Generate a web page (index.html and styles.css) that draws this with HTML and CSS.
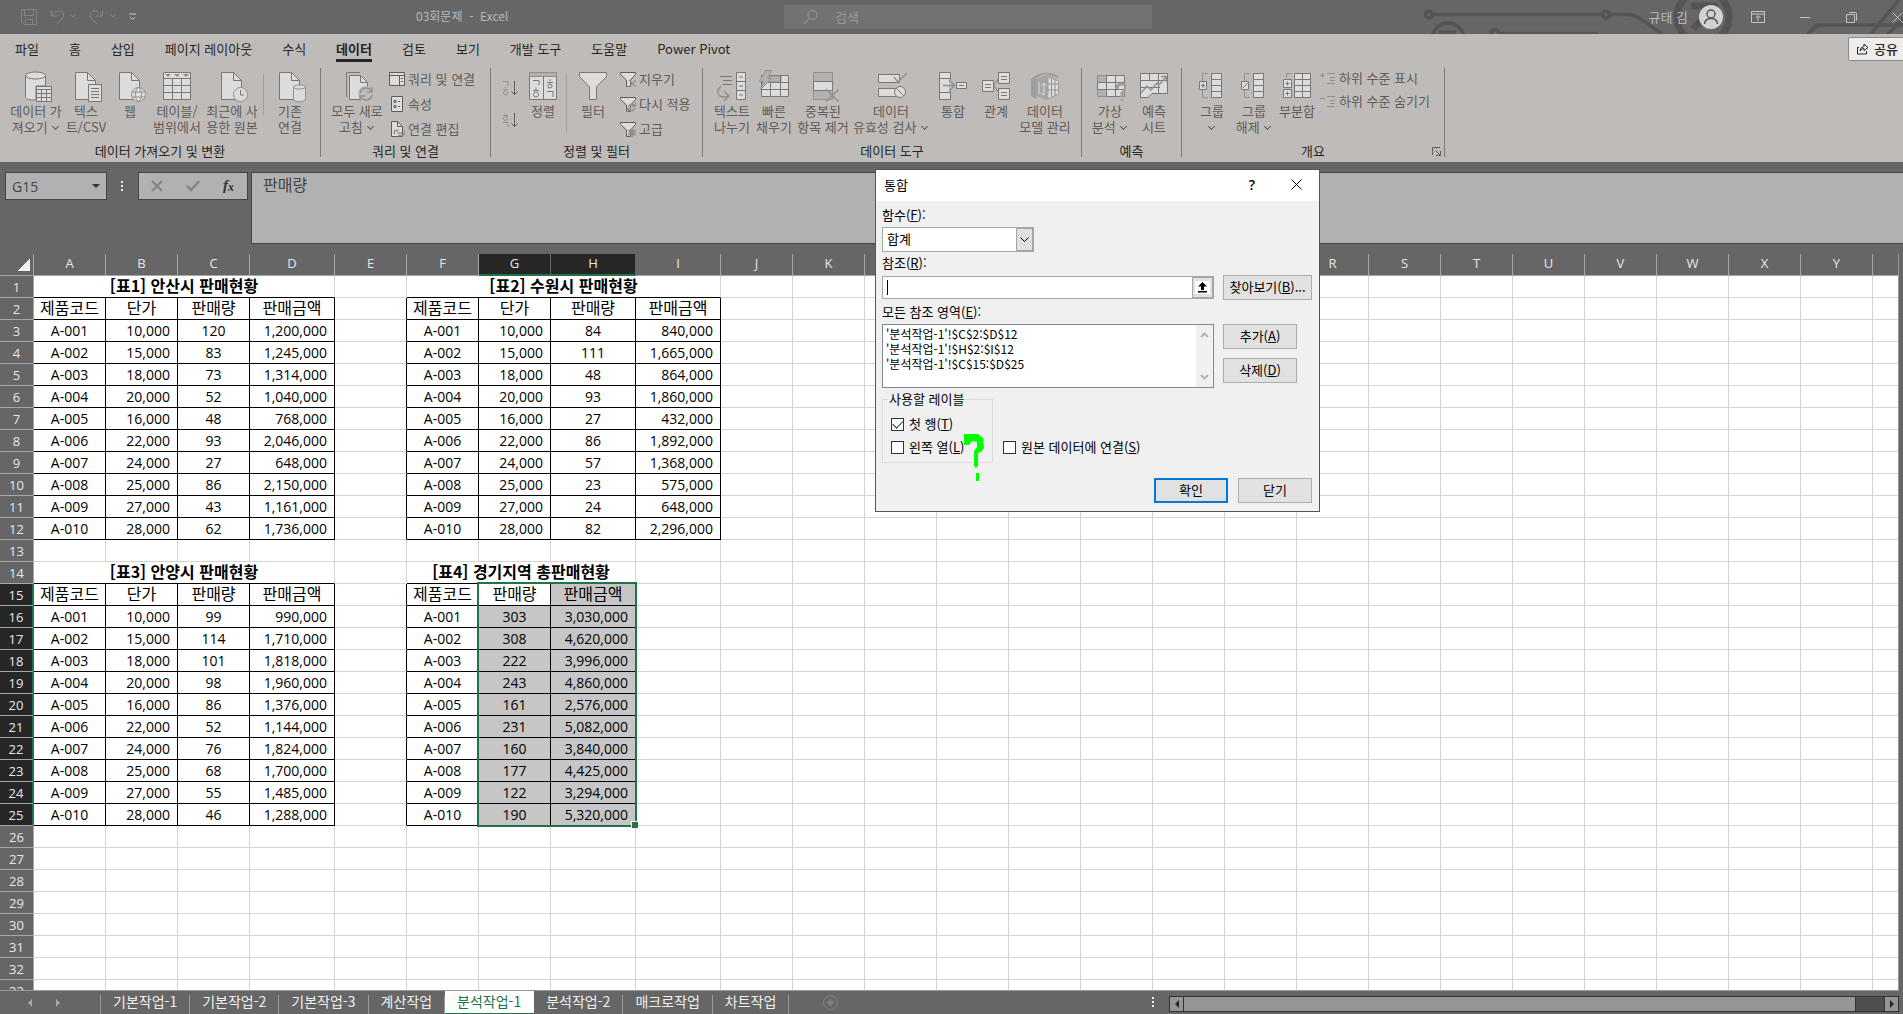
FILE: index.html
```html
<!DOCTYPE html>
<html lang="ko">
<head>
<meta charset="utf-8">
<title>03회문제 - Excel</title>
<link rel="stylesheet" href="styles.css">
</head>
<body>
<div class="app">
  <header class="titlebar">
    <svg class="circuit" width="503" height="34" viewBox="0 0 503 34" aria-hidden="true">
      <g fill="none" stroke="#545454" stroke-width="3.5">
        <circle cx="29" cy="14.500" r="3.500"/><circle cx="206" cy="14.500" r="3.500"/>
        <path d="M33 14.500H202M210 14.500H228Q236 15 242 20L262 34"/>
        <circle cx="95" cy="33" r="3.500"/><path d="M99 33.500H198"/>
        <circle cx="48" cy="39" r="16"/><path d="M39 33H56" stroke-width="5"/>
        <circle cx="303" cy="17" r="26" stroke-width="7"/><path d="M291 6H318" stroke-width="7"/><path d="M293 29L312 10" stroke-width="7"/>
        <path d="M407 35L417 25H503M470 35L499 0M487 35L503 19"/>
      </g>
    </svg>
    <div class="quick">
      <button class="ic" aria-label="저장"><svg width="18" height="18" viewBox="0 0 18 18"><path d="M1.500 1.500H16.500V16.500H4L1.500 14ZM4.500 1.500V7.500H13.500V1.500M5.500 16V11.500H12.500V16"/></svg></button>
      <button class="ic" aria-label="실행 취소"><svg width="26" height="18" viewBox="0 0 26 18"><path d="M1.500 2V8H8M2 7.500Q7 1 12 3.500Q16 7 11 12L6.500 16.500M20.500 6.500L23 9L25.500 6.500"/></svg></button>
      <button class="ic" aria-label="다시 실행"><svg width="28" height="18" viewBox="0 0 28 18"><path d="M14.500 2V8H8M14 7.500Q9 1 4 3.500Q0 7 5 12L9.500 16.500M22.500 6.500L25 9L27.500 6.500"/></svg></button>
      <button class="ic light" aria-label="사용자 지정"><svg width="10" height="10" viewBox="0 0 10 10"><path d="M1 2H8M2 5L4.500 7.500L7 5"/></svg></button>
    </div>
    <div class="doc-title">03회문제&nbsp; -&nbsp; Excel</div>
    <label class="search">
      <svg width="16" height="16" viewBox="0 0 16 16" aria-hidden="true"><circle cx="9.500" cy="6" r="4.500"/><path d="M6.500 9.500L1 15"/></svg>
      <input type="text" placeholder="검색" aria-label="검색">
    </label>
    <div class="window-tools">
      <span class="user">규태 김</span>
      <svg class="avatar" width="24" height="24" viewBox="0 0 24 24" aria-hidden="true"><circle cx="12" cy="12" r="12" fill="#d2d2d2"/><g fill="none" stroke="#555" stroke-width="1.5"><circle cx="12" cy="9" r="4"/><path d="M5.500 19Q6 13.500 12 13.500T18.500 19"/></g></svg>
      <button class="ic light" aria-label="리본 표시 옵션"><svg width="14" height="12" viewBox="0 0 14 12"><path d="M.5 .5H13.500V11.500H.5ZM.5 3H13.500M7 10V5M4.500 7L7 4.500L9.500 7"/></svg></button>
      <button class="ic light" aria-label="최소화"><svg width="11" height="11" viewBox="0 0 11 11"><path d="M0 5.500H10"/></svg></button>
      <button class="ic light" aria-label="복원"><svg width="11" height="11" viewBox="0 0 11 11"><path d="M.5 2.500H8.500V10.500H.5ZM3 .5H9Q10.500 .5 10.500 2V8.500"/></svg></button>
      <button class="ic light" aria-label="닫기"><svg width="11" height="11" viewBox="0 0 11 11"><path d="M.5 .5L10.500 10.500M10.500 .5L.5 10.500"/></svg></button>
    </div>
  </header>

  <nav class="tabs">
    <button>파일</button><button>홈</button><button>삽입</button><button>페이지 레이아웃</button><button>수식</button><button class="on">데이터</button><button>검토</button><button>보기</button><button>개발 도구</button><button>도움말</button><button>Power Pivot</button>
    <button class="share"><svg width="13" height="13" viewBox="0 0 13 13"><path d="M3 5.500H1.500V12H10.500V9M4 9Q4 5 8 4.500V2L12 5.500L8 8.500V6.500Q5.500 6.500 4 9Z"/></svg>공유</button>
  </nav>

  <div class="ribbon">
    <section class="group w-get">
      <div class="cmds">
        <button class="cmd c54"><svg viewBox="0 0 32 32"><path class="f" d="M5.500 5.500V27.500Q6 30 15.500 30H16V16H25.500V5.500"/><ellipse class="f" cx="15.500" cy="5.500" rx="10" ry="3.500"/><path class="f" d="M16.500 16.500H31.500V31.500H16.500Z"/><path d="M16.500 19.500H31.500M16.500 23.500H31.500M16.500 27.500H31.500M21.500 19.500V31M26.500 19.500V31"/></svg><span>데이터 가<br>져오기 <i></i></span></button>
        <button class="cmd c46"><svg viewBox="0 0 32 32"><path class="f" d="M5.500 2.500H17.500L25.500 10.500V29.500H5.500Z"/><path d="M17.500 2.500V10.500H25.500"/><path class="f" d="M18.500 14.500H31.500V31.500H18.500Z"/><path d="M21 18.500H29M21 21.500H29M21 24.500H29M21 27.500H29"/></svg><span>텍스<br>트/CSV</span></button>
        <button class="cmd c42"><svg viewBox="0 0 32 32"><path class="f" d="M5.500 2.500H17.500L25.500 10.500V29.500H5.500Z"/><path d="M17.500 2.500V10.500H25.500"/><g class="s"><circle class="f" cx="24.500" cy="24.500" r="7"/><ellipse cx="24.500" cy="24.500" rx="3" ry="7"/><path d="M18 22H31M18 27H31"/></g></svg><span>웹</span></button>
        <button class="cmd c52"><svg viewBox="0 0 32 32"><path class="f" d="M2.500 2.500H29.500V29.500H2.500Z"/><path d="M2.500 8.500H29.500M2.500 15.500H29.500M2.500 22.500H29.500M11.500 8.500V29M20.500 8.500V29"/><path class="g" d="M4 4H10L7 7ZM13 4H19L16 7ZM22 4H28L25 7Z"/></svg><span>테이블/<br>범위에서</span></button>
        <button class="cmd c58"><svg viewBox="0 0 32 32"><path class="f" d="M5.500 2.500H17.500L25.500 10.500V29.500H5.500Z"/><path d="M17.500 2.500V10.500H25.500"/><circle class="f s" cx="24.500" cy="24.500" r="7"/><path d="M24.500 20V25H28"/></svg><span>최근에 사<br>용한 원본</span></button>
        <span class="bar short"></span>
        <button class="cmd c48"><svg viewBox="0 0 32 32"><path class="f" d="M5.500 2.500H17.500L25.500 10.500V29.500H5.500Z"/><path d="M17.500 2.500V10.500H25.500"/><g class="s"><path class="f" d="M19.500 17V29Q20 31.500 25.500 31.500T31.500 29V17"/><ellipse class="f" cx="25.500" cy="17" rx="6" ry="2"/></g></svg><span>기존<br>연결</span></button>
      </div>
      <h2>데이터 가져오기 및 변환</h2>
    </section>
    <section class="group w-query">
      <div class="cmds">
        <button class="cmd c58"><svg viewBox="0 0 32 32"><path d="M5.500 27V2.500H19"/><path class="f" d="M8.500 5.500H19.500L26.500 12.500V29.500H8.500Z"/><path d="M19.500 5.500V12.500H26.500"/><circle cx="25" cy="24" r="8" fill="#bfbbb8" stroke="none"/><path class="s2" d="M19 23Q20 18 25 18Q29 18 31 22M31 17V22H26M31 25Q30 30 25 30Q21 30 19 26M19 31V26H24"/></svg><span>모두 새로<br>고침 <i></i></span></button>
        <div class="stack">
          <button><svg viewBox="0 0 16 16"><path class="f" d="M.5 1.500H15.500V14.500H.5Z"/><path d="M.5 4.500H15.500M10.500 4.500V14M12 7.500H14M12 10.500H14"/></svg>쿼리 및 연결</button>
          <button><svg viewBox="0 0 16 16"><path class="f" d="M2.500 .5H13.500V15.500H2.500Z"/><path d="M5 4.500H7V6.500H5ZM9 5.500H11M5 9.500H7V11.500H5ZM9 10.500H11"/></svg>속성</button>
          <button><svg viewBox="0 0 16 16"><path class="f" d="M2.500 .5H8.500L13.500 5.500V15.500H2.500Z"/><path d="M8.500 .5V5.500H13.500"/><path class="s2" d="M6 13Q4 10 7 9.500H10M15 10Q17 14 13 14.500H9M8 12H13"/></svg>연결 편집</button>
        </div>
      </div>
      <h2>쿼리 및 연결</h2>
    </section>
    <section class="group w-sort">
      <div class="cmds">
        <div class="stack sorts">
          <button aria-label="오름차순"><svg viewBox="0 0 16 16"><path class="s" d="M1 1.500H6V6M1 9.500H6M3 7.500H4"/><circle cx="3.500" cy="13" r="2" class="s"/><path d="M12.500 1V14.500M9.500 11.500L12.500 14.500L15.500 11.500"/></svg></button>
          <button aria-label="내림차순"><svg viewBox="0 0 16 16"><path class="s" d="M1 10.500H6V15M1 3.500H6M3 1.500H4"/><circle cx="3.500" cy="6.500" r="2" class="s"/><path d="M12.500 1V14.500M9.500 11.500L12.500 14.500L15.500 11.500"/></svg></button>
        </div>
        <button class="cmd c42"><svg viewBox="0 0 32 32"><path class="f" d="M2.500 2.500H29.500V29.500H2.500Z"/><path class="m" d="M2.500 2.500H29.500V6.500H2.500Z"/><path d="M16.500 6.500V29.500M6 10.500H12V15M6 20.500H12M9 17.500V20M23 9V11M20 12.500H26M20 21.500H26V27"/><circle cx="9" cy="24.500" r="2.500"/><circle cx="23" cy="16" r="2"/></svg><span>정렬</span></button>
        <span class="bar"></span>
        <button class="cmd c48"><svg viewBox="0 0 32 32"><path class="f" d="M2.500 2.500H29.500V6.500L19.500 17V29.500H12.500V17L2.500 6.500Z"/></svg><span>필터</span></button>
        <div class="stack">
          <button><svg viewBox="0 0 16 16"><path class="f" d="M.5 1.500H15.500V3.500L10.500 9V15.500H6.500V9L.5 3.500Z"/><path class="s2" d="M9 9L16 16M16 9L9 16"/></svg>지우기</button>
          <button><svg viewBox="0 0 16 16"><path class="f" d="M.5 1.500H15.500V3.500L10.500 9V15.500H6.500V9L.5 3.500Z"/><path class="s2" d="M8 11Q11 6 15 10M15.500 6V10H12M15 12Q12 17 8 13M7.500 16V12.500H11"/></svg>다시 적용</button>
          <button><svg viewBox="0 0 16 16"><path class="f" d="M.5 1.500H15.500V3.500L10.500 9V15.500H6.500V9L.5 3.500Z"/><circle class="s2" cx="12" cy="11.500" r="2.500"/><path class="s2" d="M12 7V16M8 9L16 14M16 9L8 14"/></svg>고급</button>
        </div>
      </div>
      <h2>정렬 및 필터</h2>
    </section>
    <section class="group w-tools">
      <div class="cmds">
        <button class="cmd c42"><svg viewBox="0 0 32 32"><path d="M4 6.500H16M7 10.500H16M7 14.500H16"/><path class="s2" d="M5 16Q-1 22 4 26Q8 28 12 26M8 21L13 26L8 31"/><path class="f" d="M20.500 2.500H29.500V29.500H20.500Z"/><path d="M20.500 11.500H29.500M20.500 20.500H29.500M23 7H27M23 16H27M23 25H27"/></svg><span>텍스트<br>나누기</span></button>
        <button class="cmd c42"><svg viewBox="0 0 32 32"><path class="f" d="M3.500 5.500H30.500V26.500H3.500Z"/><path class="m" d="M12 6H23V12H8Z"/><path d="M3.500 12.500H30.500M3.500 19.500H30.500M12.500 12V26M22.500 5V26"/><path class="m" d="M7.500 .5H13.500L9.500 8.500H13.500L2.500 19.500L5.500 11.500H1.500Z"/></svg><span>빠른<br>채우기</span></button>
        <button class="cmd c56"><svg viewBox="0 0 32 32"><path class="m" d="M6.500 2.500H25.500V29.500H6.500Z"/><path class="f" d="M6.500 11.500H25.500V20.500H6.500Z"/><path class="s2" d="M19 19L32 32M32 19L19 32"/></svg><span>중복된<br>항목 제거</span></button>
        <button class="cmd c80"><svg viewBox="0 0 32 32"><path class="f" d="M3.500 4.500H24.500V12.500H3.500ZM3.500 18.500H24.500V26.500H3.500Z"/><path class="s2" d="M19 7L23 12L32 3"/><circle class="f" cx="25" cy="22" r="5.500"/><path d="M21 18L29 26"/></svg><span>데이터<br>유효성 검사 <i></i></span></button>
        <button class="cmd c44"><svg viewBox="0 0 32 32"><path class="f" d="M2.500 2.500H13.500V29.500H2.500Z"/><path d="M2.500 8.500H13.500M2.500 22.500H13.500"/><path d="M13.500 10V21" stroke="#bfbbb8" stroke-width="3"/><path class="s2" d="M6 15.500H17M12 10L17.500 15.500L12 21"/><path class="f" d="M19.500 12.500H29.500V18.500H19.500Z"/><path d="M22 15.500H27"/></svg><span>통합</span></button>
        <button class="cmd c42"><svg viewBox="0 0 32 32"><path class="f" d="M2.500 10.500H13.500V21.500H2.500ZM18.500 2.500H29.500V13.500H18.500ZM18.500 18.500H29.500V29.500H18.500Z"/><path d="M5 14.500H11M5 17.500H11M21 6.500H27M21 9.500H27M21 22.500H27M21 25.500H27M18.500 9L13.500 15.500L18.500 22"/></svg><span>관계</span></button>
        <button class="cmd c56"><svg viewBox="0 0 32 32"><path d="M2 9Q14 -2 30 6L28 8L16 4L7 8V29L2 26Z" fill="#a19f9d" stroke="none"/><path d="M7 9L17 5L30 11V24L17 30L7 26Z" fill="#a7a5a3" stroke="none"/><path d="M19 7L29.500 11V24L19 29Z" fill="#dddcdb" stroke="#a19f9d"/><path class="s" d="M22.500 8V27M26 10V26M19 14H29.500M19 20H29.500"/><path d="M10 12V24M15 25V13M12.500 15.500L15 13L17.500 15.500M15 25L12 23" stroke="#dddcdb"/></svg><span>데이터<br>모델 관리</span></button>
      </div>
      <h2>데이터 도구</h2>
    </section>
    <section class="group w-fore">
      <div class="cmds">
        <button class="cmd c46"><svg viewBox="0 0 32 32"><path class="f" d="M3.500 5.500H30.500V26.500H3.500Z"/><path class="m" d="M3.500 5.500H12.500V12.500H3.500ZM3.500 19.500H12.500V26.500H3.500Z"/><path d="M3.500 12.500H30.500M3.500 19.500H30.500M12.500 5V26M21.500 5V26"/><path d="M23 19Q23 14 27.500 14Q32 14 31.500 18.500Q31 21 28 23V27M28 29V31" stroke="#a19f9d" stroke-width="3"/></svg><span>가상<br>분석 <i></i></span></button>
        <button class="cmd c42"><svg viewBox="0 0 32 32"><path class="f" d="M2.500 3.500H29.500V23.500H14L10 27.500H2.500Z"/><path d="M2.500 10.500H29.500M2.500 17.500H22M11.500 3.500V10M20.500 3.500V23"/><path class="s2" d="M3 23L9 16L13 20L19 13L21 15L28 7M23 6.500H28.500V12"/></svg><span>예측<br>시트</span></button>
      </div>
      <h2>예측</h2>
    </section>
    <section class="group w-out">
      <div class="cmds">
        <button class="cmd c42"><svg viewBox="0 0 32 32"><path class="s" d="M12 3.500H6.500V11M6.500 20V27.500H12"/><path class="f" d="M15.500 3.500H25.500V27.500H15.500ZM3.500 11.500H10.500V19.500H3.500Z"/><path d="M15.500 9.500H25.500M15.500 15.500H25.500M15.500 21.500H25.500M5 15.500H9M7 13V18"/></svg><span>그룹<br><i></i></span></button>
        <button class="cmd c42"><svg viewBox="0 0 32 32"><path class="s" d="M12 3.500H6.500V11M6.500 20V27.500H12"/><path class="f" d="M15.500 3.500H25.500V27.500H15.500ZM3.500 11.500H10.500V19.500H3.500Z"/><path d="M15.500 9.500H25.500M15.500 15.500H25.500M15.500 21.500H25.500M5 18L9.500 13"/></svg><span>그룹<br>해제 <i></i></span></button>
        <button class="cmd c44"><svg viewBox="0 0 32 32"><path class="s" d="M11 3.500H5.500V8"/><path class="f" d="M13.500 3.500H29.500V27.500H13.500ZM2.500 9.500H10.500V17.500H2.500ZM2.500 19.500H10.500V27.500H2.500Z"/><path d="M13.500 9.500H29.500M13.500 15.500H29.500M13.500 21.500H29.500M21.500 3.500V27M4.500 13.500H8.500M6.500 11.500V15.500M4.500 23.500H8.500M6.500 21.500V25.500"/></svg><span>부분합</span></button>
        <div class="stack levels">
          <button><svg viewBox="0 0 16 16"><path class="s" d="M0 5.500H5M2.500 3V8M7 3.500H15M10 7.500H15M10 10.500H15M7 13.500H15"/></svg>하위 수준 표시</button>
          <button><svg viewBox="0 0 16 16"><path class="s" d="M0 5.500H5M7 3.500H15M10 7.500H15M10 10.500H15M7 13.500H15"/></svg>하위 수준 숨기기</button>
        </div>
      </div>
      <h2>개요</h2>
      <svg class="launch" width="9" height="9" viewBox="0 0 9 9" aria-hidden="true"><path d="M.5 8V.5H8M3.500 3.500L8 8M8.500 4V8.500H4"/></svg>
    </section>
  </div>

  <div class="formula">
    <label class="namebox"><input type="text" value="G15" aria-label="이름 상자"><span class="tri"></span></label>
    <span class="dots"></span>
    <div class="fx">
      <button aria-label="취소"><svg width="12" height="12" viewBox="0 0 12 12"><path d="M1 1L11 11M11 1L1 11"/></svg></button>
      <button aria-label="입력"><svg width="14" height="12" viewBox="0 0 14 12"><path d="M1 6L5 10L13 1" stroke-width="2.500"/></svg></button>
      <button aria-label="함수 삽입" class="fn">f<sub>x</sub></button>
    </div>
    <textarea aria-label="수식 입력줄">판매량</textarea>
  </div>

  <main class="sheet">
    <table class="grid" id="grid"></table>
    <div class="selection"><span></span></div>
  </main>

  <footer class="sheetbar">
    <div class="arrows"><span class="al"></span><span class="ar"></span></div>
    <button>기본작업-1</button><button>기본작업-2</button><button>기본작업-3</button><button>계산작업</button><button class="on">분석작업-1</button><button>분석작업-2</button><button>매크로작업</button><button>차트작업</button>
    <svg class="plus" width="15" height="15" viewBox="0 0 15 15" aria-hidden="true"><circle cx="7.500" cy="7.500" r="7"/><path d="M7.500 4V11M4 7.500H11" stroke-width="2"/></svg>
    <span class="dots"></span>
    <div class="hscroll"><span class="end"><b class="al"></b></span><span class="thumb"></span><span class="end last"><b class="ar"></b></span></div>
  </footer>
</div>

<form class="dialog" role="dialog" aria-labelledby="dlg-title">
  <div class="dlg-head"><h1 id="dlg-title">통합</h1>
    <button type="button" class="help" aria-label="도움말">?</button>
    <button type="button" class="close" aria-label="닫기"><svg width="11" height="11" viewBox="0 0 11 11"><path d="M.5 .5L10.500 10.500M10.500 .5L.5 10.500"/></svg></button>
  </div>
  <div class="dlg-body">
    <label for="fn">함수(<u>F</u>):</label>
    <div class="combo"><select id="fn"><option>합계</option></select><span class="drop"><svg width="9" height="6" viewBox="0 0 9 6"><path d="M.5 .5L4.500 4.500L8.500 .5"/></svg></span></div>
    <label for="ref">참조(<u>R</u>):</label>
    <div class="line">
      <div class="refbox"><input id="ref" type="text"><i class="caret"></i><button type="button" aria-label="범위 선택"><svg width="15" height="13" viewBox="0 0 15 13"><path fill="#fff" d="M0 0H15V13H0Z"/><path d="M7.500 1L12 5.500H9V9H6V5.500H3ZM3 10H12V11.500H3Z"/></svg></button></div>
      <button type="button" class="btn wide">찾아보기(<u>B</u>)...</button>
    </div>
    <label for="refs">모든 참조 영역(<u>E</u>):</label>
    <div class="line">
      <div class="listbox"><select id="refs" size="4" multiple><option>'분석작업-1'!$C$2:$D$12</option><option>'분석작업-1'!$H$2:$I$12</option><option>'분석작업-1'!$C$15:$D$25</option></select>
        <div class="vscroll"><svg width="9" height="6" viewBox="0 0 9 6"><path d="M1 5L4.500 1.500L8 5"/></svg><svg width="9" height="6" viewBox="0 0 9 6"><path d="M1 1L4.500 4.500L8 1"/></svg></div></div>
      <div class="col"><button type="button" class="btn">추가(<u>A</u>)</button><button type="button" class="btn">삭제(<u>D</u>)</button></div>
    </div>
    <div class="line options">
      <fieldset><legend>사용할 레이블</legend>
        <label><input type="checkbox" checked><span>첫 행(<u>T</u>)</span></label>
        <label><input type="checkbox"><span>왼쪽 열(<u>L</u>)</span></label>
      </fieldset>
      <label class="link"><input type="checkbox"><span>원본 데이터에 연결(<u>S</u>)</span></label>
      <svg class="mark" width="22" height="49" viewBox="0 0 22 49" aria-hidden="true"><path d="M1 1H15L20 5L21 15L18 19L15 20V33L13 35L11 33V18L14 14V9L9 8L6 12H1ZM13 40H16V48H13Z"/></svg>
    </div>
    <div class="foot"><button type="button" class="btn ok">확인</button><button type="button" class="btn">닫기</button></div>
  </div>
</form>
<script src="script.js"></script>
</body>
</html>
```

FILE: styles.css
```css
* { box-sizing: border-box; }
body {
  margin: 0;
  overflow: hidden;
  font-family: "Noto Sans CJK KR", "Open Sans", sans-serif;
  font-size: 13px;
  color: #262626;
}
button, input, select, textarea { font: inherit; color: inherit; margin: 0; padding: 0; border: 0; border-radius: 0; background: none; outline: 0; }
button { white-space: nowrap; }
h1, h2 { margin: 0; font-weight: 400; font-size: 13px; }
svg { display: block; flex: none; fill: none; stroke: currentColor; }
.app { display: flex; flex-direction: column; height: 100vh; background: #666; }

/* title bar */
.titlebar { position: relative; display: flex; align-items: center; height: 34px; flex: none; background: #666; color: #b8b8b8; overflow: hidden; }
.circuit { position: absolute; right: 0; top: 0; }
.quick { display: flex; align-items: center; gap: 12px; padding-left: 20px; width: 416px; color: #858585; }
.light { color: #c4c4c4; }
.doc-title { width: 368px; font-size: 12px; line-height: 16px; padding-bottom: 3px; }
.search { display: flex; align-items: center; gap: 16px; width: 368px; height: 24px; padding-left: 19px; background: #727272; color: #999; }
.search input { width: 200px; height: 20px; margin-bottom: 2px; font-size: 13px; }
.search input::placeholder { color: #999; opacity: 1; }
.window-tools { position: relative; display: flex; align-items: center; margin-left: auto; }
.user { margin-right: 11px; padding-bottom: 2px; font-size: 13px; }
.avatar { margin-right: 28px; stroke: none; }
.window-tools .ic { margin-right: 35px; }
.window-tools .ic:last-child { margin-right: 0; }

/* tabs */
.tabs { display: flex; align-items: stretch; height: 30px; flex: none; background: #bfbbb8; }
.tabs button { padding: 0 15px; line-height: 26px; display: flex; align-items: center; padding-bottom: 1px; }
.tabs .on { position: relative; font-weight: 700; }
.tabs .on::after { content: ""; position: absolute; left: 15px; right: 15px; bottom: 2px; height: 3px; background: #262626; }
.tabs .share { margin: 3px -4px 3px auto; height: 24px; padding: 0 8px 1px 7px; gap: 5px; background: #efedec; border: 1px solid #8c8987; border-radius: 2px; font-weight: 500; }

/* ribbon */
.ribbon { display: flex; height: 98px; flex: none; padding-top: 4px; background: #bfbbb8; overflow: hidden; }
.group { position: relative; display: flex; flex-direction: column; flex: none; height: 89px; border-right: 1px solid #7d7a78; }
.w-get { width: 321px; }
.w-get .cmds { padding-left: 9px; }
.w-query { width: 170px; }
.w-query .cmds { padding-left: 7px; }
.w-sort { width: 212px; }
.w-sort .cmds { padding-left: 11px; }
.w-tools { width: 379px; }
.w-tools .cmds { padding-left: 8px; }
.w-fore { width: 100px; }
.w-fore .cmds { padding-left: 5px; }
.w-out { width: 263px; }
.w-out .cmds { padding-left: 9px; }
.group h2 { text-align: center; line-height: 16px; padding-top: 7px; }
.cmds { display: flex; align-items: flex-start; height: 68px; flex: none; color: #6e6b69; }
.cmd { display: flex; flex-direction: column; align-items: center; line-height: 16px; padding-top: 2px; color: #5f5c5a; }
.cmd svg { width: 32px; height: 32px; margin-bottom: 1px; color: #7a7775; }
.cmd span { height: 32px; }
.cmd i { display: inline-block; width: 5px; height: 5px; border: solid #5f5c5a; border-width: 0 1px 1px 0; transform: rotate(45deg); margin: 0 2px 3px; }
.c42 { width: 42px; } .c44 { width: 44px; } .c46 { width: 46px; } .c48 { width: 48px; }
.c52 { width: 52px; } .c54 { width: 54px; } .c56 { width: 56px; } .c58 { width: 58px; } .c80 { width: 80px; }
.f { fill: #dddcdb; }
.g { fill: #8f8d8b; stroke: none; }
.m { fill: #b3b1af; stroke: #93918f; }
.s, .s2 { stroke: #93918f; }
.s2 { stroke-width: 1.5; }
.bar { width: 1px; height: 58px; margin: 6px 2px 0; background: #a19e9c; }
.bar.short { height: 41px; }
.stack { display: flex; flex-direction: column; margin: -2px 0 0 3px; }
.stack button { display: flex; align-items: center; gap: 3px; height: 25px; color: #5f5c5a; line-height: 16px; }
.stack svg { width: 16px; height: 16px; }
.sorts { gap: 7px; margin: 7px 4px 0 0; }
.levels { margin-left: 1px; }
.levels button { height: 23px; }
.launch { position: absolute; right: 3px; bottom: 1px; color: #5f5c5a; }

/* formula bar */
.formula { display: flex; align-items: flex-start; height: 92px; flex: none; padding: 10px 0 0 5px; color: #444; }
.namebox { display: flex; align-items: center; width: 102px; height: 28px; border: 1px solid #444; background: #b1b1b1; }
.namebox input { flex: 1; min-width: 0; padding-left: 6px; font-family: "Open Sans", sans-serif; font-size: 14px; }
.tri { margin-right: 6px; border: 4px solid transparent; border-top-color: #333; border-bottom: 0; }
.dots { width: 2px; height: 11px; background: repeating-linear-gradient(#eee 0 2px, transparent 2px 4px); }
.formula .dots { margin: 9px 15px 0 14px; }
.fx { display: flex; align-items: center; justify-content: space-between; width: 110px; height: 28px; padding: 0 13px 0 12px; border: 1px solid #444; background: #b1b1b1; color: #858585; }
.fx svg { stroke-width: 2; }
.fn { font: italic 700 15px "Liberation Serif", serif; color: #333; line-height: 20px; }
.fn sub { font-size: 12px; vertical-align: -1px; }
.formula textarea { flex: 1; height: 72px; margin-left: 3px; padding: 1px 11px; border: 1px solid #444; border-right: 0; background: #b1b1b1; font-size: 16px; line-height: 20px; resize: none; }

/* worksheet */
.sheet { position: relative; flex: 1; min-height: 0; overflow: hidden; margin-right: 4px; border-right: 1px solid #999; border-bottom: 1px solid #999; }
.grid { table-layout: fixed; width: 1945px; border-collapse: separate; border-spacing: 0; background: #666; }
.grid th, .grid td { height: 22px; padding: 0; overflow: hidden; white-space: nowrap; border: 0 solid #d4d4d4; border-width: 0 1px 1px 0; }
.grid th { font: 13px/20px "Open Sans", sans-serif; color: #e6e6e6; border-color: #a6a6a6; }
.grid thead th { line-height: 16px; padding-bottom: 4px; }
.grid td { background: #fff; color: #000; font: 14px/20px "Open Sans", sans-serif; text-align: center; }
.grid td.ko { font: 16px/16px "Noto Sans CJK KR", sans-serif; padding-bottom: 4px; }
.grid td.title { font: 700 16px/16px "Noto Sans CJK KR", sans-serif; padding-bottom: 4px; }
.grid td.num { text-align: right; padding-right: 7px; }
.grid td.bb { border-bottom-color: #000; }
.grid td.br { border-right-color: #000; }
.grid td.sel { background: #c6c6c6; }
.grid th.hot { background: #262626; border-right-color: #666; }
.grid thead th.hot { border-bottom: 2px solid #217346; padding-bottom: 3px; }
.grid tbody th.hot { border-right: 2px solid #217346; }
.corner { background: linear-gradient(135deg, transparent 50%, #f0f0f0 50%) 17px 4px / 13px 13px no-repeat; }
.selection { position: absolute; left: 477px; top: 328px; width: 160px; height: 245px; border: 2px solid #217346; }
.selection span { position: absolute; right: -3px; bottom: -3px; width: 6px; height: 6px; background: #217346; box-shadow: -1px -1px #fff; }

/* sheet tabs */
.sheetbar { display: flex; align-items: stretch; height: 23px; flex: none; padding-right: 4px; background: #666; color: #f0f0f0; }
.sheetbar button { padding: 0 13px 3px 12px; font-size: 14px; line-height: 18px; background: linear-gradient(#999, #999) right 4px / 1px 20px no-repeat; }
.sheetbar .on { background: #fff; color: #217346; border-bottom: 1px solid #217346; padding-bottom: 2px; }
.arrows { display: flex; align-items: center; gap: 24px; width: 101px; padding-left: 28px; background: linear-gradient(#999, #999) right 4px / 1px 20px no-repeat; }
.al, .ar { border: 4px solid transparent; color: #a6a6a6; }
.al { border-right-color: currentColor; border-left: 0; }
.ar { border-left-color: currentColor; border-right: 0; }
.plus { align-self: center; margin-left: 34px; color: #858585; }
.sheetbar .dots { align-self: center; margin-left: auto; }
.hscroll { display: flex; width: 730px; height: 16px; margin: 5px 0 0 15px; border: 1px solid #333; background: #4f4f4f; }
.end { display: flex; align-items: center; justify-content: center; width: 14px; background: #959595; border-right: 1px solid #333; }
.end b { color: #262626; }
.end.last { border: 0; border-left: 1px solid #333; margin-left: auto; }
.thumb { width: 672px; background: #959595; border-right: 1px solid #333; }

/* consolidate dialog */
.dialog { position: absolute; left: 875px; top: 169px; width: 445px; background: #f0f0f0; border: 1px solid #555; color: #000; line-height: 16px; }
.dlg-head { display: flex; align-items: center; height: 31px; padding: 0 17px 2px 8px; background: #fff; }
.dlg-head h1 { margin-right: auto; }
.help { font: 600 14px "Open Sans", sans-serif; margin-right: 36px; }
.dlg-body { display: flex; flex-direction: column; padding: 6px 7px 8px 6px; }
.dlg-body > label { height: 17px; }
.combo { display: flex; width: 152px; height: 25px; margin: 3px 0 3px; border: 1px solid #a6a6a6; background: #fff; }
.combo select { flex: 1; appearance: none; padding: 0 0 2px 4px; }
.drop { display: flex; align-items: center; justify-content: center; width: 17px; background: #e1e1e1; border: 1px solid #a6a6a6; }
.line { display: flex; align-items: flex-start; justify-content: space-between; }
.refbox { position: relative; display: flex; width: 332px; height: 23px; margin-top: 4px; border: 1px solid #a6a6a6; background: #fff; }
.refbox input { flex: 1; padding-left: 4px; }
.refbox button { display: flex; align-items: center; justify-content: center; width: 21px; background: #e1e1e1; border: 1px solid #a6a6a6; }
.refbox path { stroke: none; }
.refbox path + path { fill: #000; }
.caret { position: absolute; left: 4px; top: 3px; width: 1px; height: 15px; background: #000; }
.btn { width: 74px; height: 25px; padding-bottom: 2px; line-height: 16px; background: #e1e1e1; border: 1px solid #adadad; }
.btn.wide { width: 89px; margin: 3px 0 4px; }
.btn.ok { border: 2px solid #0078d7; }
.listbox { display: flex; width: 332px; height: 64px; margin-top: 3px; border: 1px solid #828790; background: #fff; }
.listbox select { flex: 1; height: 62px; overflow: hidden; font-size: 12px; }
.listbox option { height: 15px; min-height: 15px; line-height: 13px; padding: 0 3px 2px; }
.vscroll { display: flex; flex-direction: column; justify-content: space-between; align-items: center; width: 17px; padding: 7px 0; background: #f0f0f0; color: #b5b5b5; stroke-width: 2; }
.col { display: flex; flex-direction: column; gap: 9px; width: 89px; margin-top: 3px; }
.options { position: relative; justify-content: flex-start; margin-top: 3px; }
fieldset { width: 111px; height: 72px; margin: 0; padding: 6px 8px 0; border: 1px solid #dcdcdc; min-width: 0; }
legend { padding: 0 1px; margin-left: -3px; }
fieldset label, .link { display: flex; align-items: center; gap: 5px; height: 23px; white-space: nowrap; }
fieldset label span, .link span { padding-bottom: 2px; }
.link { margin: 45px 0 0 10px; }
input[type="checkbox"] { appearance: none; width: 13px; height: 13px; flex: none; border: 1px solid #333; background: #fff; }
input[type="checkbox"]:checked::after { content: ""; display: block; width: 9px; height: 5px; margin: 1px; border: solid #333; border-width: 0 0 1px 1px; transform: rotate(-45deg); }
.mark { position: absolute; left: 81px; top: 42px; fill: #0f0; stroke: none; }
.foot { display: flex; justify-content: flex-end; gap: 10px; margin-top: 15px; }
```

FILE: script.js
```js
const COLS = 'ABCDEFGHIJKLMNOPQRSTUVWXYZ'.split('');
const WIDE = ['D', 'H', 'I'];
const ROWS = 33;
const prices = [10000, 15000, 18000, 20000, 16000, 22000, 24000, 25000, 27000, 28000];
const blocks = [
  { title: '[표1] 안산시 판매현황', row: 1, col: 0, price: true, qty: [120, 83, 73, 52, 48, 93, 27, 86, 43, 62] },
  { title: '[표2] 수원시 판매현황', row: 1, col: 5, price: true, qty: [84, 111, 48, 93, 27, 86, 57, 23, 24, 82] },
  { title: '[표3] 안양시 판매현황', row: 14, col: 0, price: true, qty: [99, 114, 101, 98, 86, 52, 76, 68, 55, 46] },
  { title: '[표4] 경기지역 총판매현황', row: 14, col: 5, price: false, qty: [303, 308, 222, 243, 161, 231, 160, 177, 122, 190] }
];

// cell contents and classes, keyed by "row,col"
const cells = {};
const cell = (r, c) => (cells[r + ',' + c] ||= { text: '', cls: [] });

for (const b of blocks) {
  const heads = b.price ? ['제품코드', '단가', '판매량', '판매금액'] : ['제품코드', '판매량', '판매금액'];
  const last = b.col + heads.length - 1;
  const t = cell(b.row, b.col);
  t.text = b.title;
  t.span = heads.length;
  t.cls.push('title', 'bb');
  heads.forEach((h, i) => {
    const c = cell(b.row + 1, b.col + i);
    c.text = h;
    c.cls.push('ko');
  });
  b.qty.forEach((q, i) => {
    const amount = (q * prices[i]).toLocaleString('en-US');
    const code = 'A-' + String(i + 1).padStart(3, '0');
    const values = b.price ? [code, prices[i].toLocaleString('en-US'), q, amount] : [code, q, amount];
    values.forEach((v, j) => {
      const c = cell(b.row + 2 + i, b.col + j);
      c.text = v;
      if (String(v).includes(',')) c.cls.push('num');
    });
  });
  for (let r = b.row + 1; r <= b.row + 11; r++) {
    if (b.col > 0) cell(r, b.col - 1).cls.push('br');
    for (let c = b.col; c <= last; c++) cell(r, c).cls.push('bb', 'br');
  }
}

const isSelected = (r, c) => r >= 15 && r <= 25 && (c === 6 || c === 7);
let html = '<colgroup><col style="width:34px">' +
  COLS.map(c => `<col style="width:${WIDE.includes(c) ? 85 : 72}px">`).join('') + '</colgroup>';
html += '<thead><tr><th class="corner"></th>' +
  COLS.map(c => `<th${c === 'G' || c === 'H' ? ' class="hot"' : ''}>${c}</th>`).join('') + '</tr></thead><tbody>';
for (let r = 1; r <= ROWS; r++) {
  html += `<tr><th${r >= 15 && r <= 25 ? ' class="hot"' : ''}>${r}</th>`;
  for (let c = 0; c < COLS.length; c++) {
    const d = cells[r + ',' + c] || { text: '', cls: [] };
    const cls = [...d.cls];
    if (isSelected(r, c) && !(r === 15 && c === 6)) cls.push('sel');
    html += `<td class="${cls.join(' ')}"${d.span ? ` colspan="${d.span}"` : ''}>${d.text}</td>`;
    if (d.span) c += d.span - 1;
  }
  html += '</tr>';
}
document.getElementById('grid').innerHTML = html + '</tbody>';
```
